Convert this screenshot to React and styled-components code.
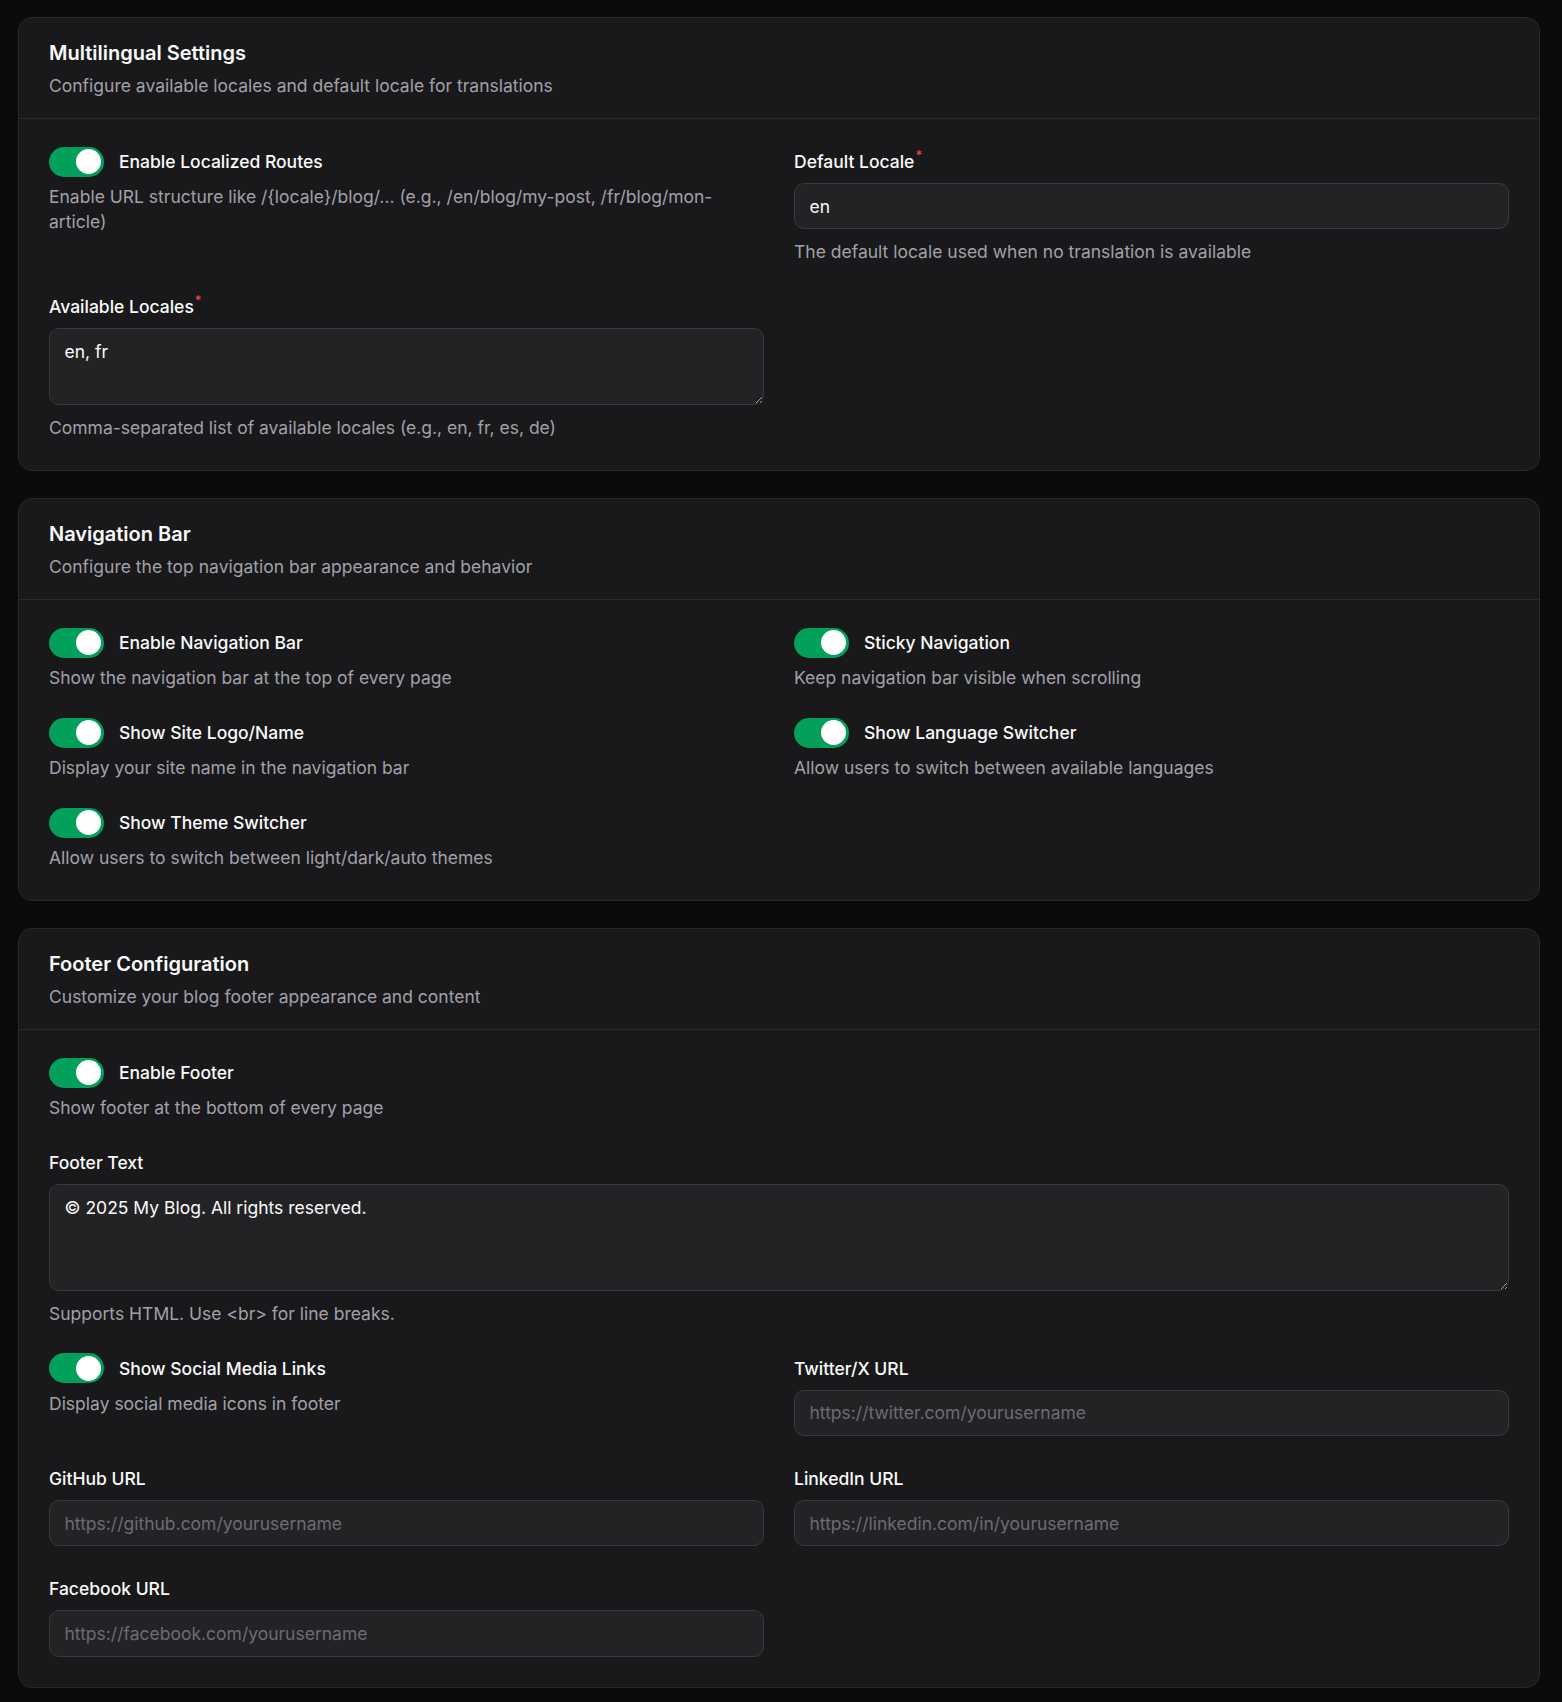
import React from "react";
import styled, { createGlobalStyle } from "styled-components";

const GlobalStyle = createGlobalStyle`
  * {
    box-sizing: border-box;
  }
  body {
    margin: 0;
    background: #0b0b0d;
    color: #fafafa;
    font-family: Inter, "Noto Sans", "Liberation Sans", sans-serif;
    -webkit-font-smoothing: antialiased;
  }
`;

const Page = styled.div`
  display: flex;
  flex-direction: column;
  gap: 27px;
  padding: 17px 22px 15px 18px;
`;

const Card = styled.section`
  background: #19191b;
  border: 1px solid #29292c;
  border-radius: 14px;
`;

const CardHeader = styled.header`
  display: flex;
  flex-direction: column;
  gap: 5px;
  padding: 20px 30px;
  border-bottom: 1px solid #2a2a2d;
`;

const CardTitle = styled.h2`
  margin: 0;
  font-size: 20px;
  line-height: 30px;
  font-weight: 600;
  color: #fafafa;
`;

const CardDescription = styled.p`
  margin: 0;
  font-size: 17.5px;
  line-height: 25px;
  color: #a1a1aa;
`;

const CardBody = styled.div`
  display: grid;
  grid-template-columns: 1fr 1fr;
  gap: 30px;
  padding: 30px;
  align-items: start;
`;

const Cell = styled.div`
  display: flex;
  flex-direction: column;
  min-width: 0;
  grid-column: ${(p) => (p.$wide ? "1 / -1" : "auto")};
`;

const SwitchRow = styled.div`
  display: flex;
  align-items: center;
  gap: 15px;
  height: 25px;
`;

const Track = styled.button`
  flex-shrink: 0;
  display: flex;
  align-items: center;
  width: 55px;
  height: 30px;
  padding: 0;
  border: 2.5px solid transparent;
  border-radius: 999px;
  background: ${(p) => (p.$on ? "#03a05b" : "#3f3f46")};
  cursor: pointer;
`;

const Thumb = styled.span`
  display: block;
  width: 25px;
  height: 25px;
  border-radius: 50%;
  background: #ffffff;
  transform: translateX(${(p) => (p.$on ? "25px" : "0")});
`;

const SwitchLabel = styled.span`
  font-size: 17.5px;
  line-height: 25px;
  font-weight: 500;
  color: #fafafa;
`;

const Hint = styled.p`
  margin: 10px 0 0;
  font-size: 17.5px;
  line-height: 25px;
  color: #a1a1aa;
`;

const Label = styled.label`
  display: block;
  margin-bottom: 8.75px;
  font-size: 17.5px;
  line-height: 25px;
  font-weight: 500;
  color: #fafafa;
`;

const Required = styled.span`
  margin-left: 1px;
  font-size: 13px;
  line-height: 1;
  vertical-align: top;
  color: #ef4444;
`;

const fieldStyles = `
  width: 100%;
  border: 1px solid #3a3a3e;
  border-radius: 10px;
  background: #232326;
  color: #fafafa;
  font-family: Inter, "Noto Sans", "Liberation Sans", sans-serif;
  font-size: 17.5px;
  line-height: 25px;
  outline: none;

  &::placeholder {
    color: #6c6c74;
  }
`;

const Input = styled.input`
  ${fieldStyles}
  height: 46.5px;
  padding: 0 14.5px;
`;

const TextArea = styled.textarea`
  ${fieldStyles}
  display: block;
  height: ${(p) => p.$height}px;
  padding: 10px 14.5px;
  resize: vertical;
`;

const Toggle = ({ label, hint, on = true }) => (
  <Cell>
    <SwitchRow>
      <Track type="button" role="switch" aria-checked={on} $on={on}>
        <Thumb $on={on} />
      </Track>
      <SwitchLabel>{label}</SwitchLabel>
    </SwitchRow>
    {hint && <Hint>{hint}</Hint>}
  </Cell>
);

const Field = ({ label, required, hint, wide, children }) => (
  <Cell $wide={wide}>
    <Label>
      {label}
      {required && <Required>*</Required>}
    </Label>
    {children}
    {hint && <Hint>{hint}</Hint>}
  </Cell>
);

const SettingsCard = ({ title, description, children }) => (
  <Card>
    <CardHeader>
      <CardTitle>{title}</CardTitle>
      <CardDescription>{description}</CardDescription>
    </CardHeader>
    <CardBody>{children}</CardBody>
  </Card>
);

const App = () => (
  <>
    <GlobalStyle />
    <Page>
      <SettingsCard
        title="Multilingual Settings"
        description="Configure available locales and default locale for translations"
      >
        <Toggle
          label="Enable Localized Routes"
          hint="Enable URL structure like /{locale}/blog/... (e.g., /en/blog/my-post, /fr/blog/mon-article)"
        />
        <Field
          label="Default Locale"
          required
          hint="The default locale used when no translation is available"
        >
          <Input defaultValue="en" />
        </Field>
        <Field
          label="Available Locales"
          required
          hint="Comma-separated list of available locales (e.g., en, fr, es, de)"
        >
          <TextArea $height={77} defaultValue="en, fr" />
        </Field>
      </SettingsCard>

      <SettingsCard
        title="Navigation Bar"
        description="Configure the top navigation bar appearance and behavior"
      >
        <Toggle
          label="Enable Navigation Bar"
          hint="Show the navigation bar at the top of every page"
        />
        <Toggle
          label="Sticky Navigation"
          hint="Keep navigation bar visible when scrolling"
        />
        <Toggle
          label="Show Site Logo/Name"
          hint="Display your site name in the navigation bar"
        />
        <Toggle
          label="Show Language Switcher"
          hint="Allow users to switch between available languages"
        />
        <Toggle
          label="Show Theme Switcher"
          hint="Allow users to switch between light/dark/auto themes"
        />
      </SettingsCard>

      <SettingsCard
        title="Footer Configuration"
        description="Customize your blog footer appearance and content"
      >
        <Toggle
          label="Enable Footer"
          hint="Show footer at the bottom of every page"
        />
        <Field
          wide
          label="Footer Text"
          hint="Supports HTML. Use <br> for line breaks."
        >
          <TextArea
            $height={107}
            defaultValue="© 2025 My Blog. All rights reserved."
          />
        </Field>
        <Toggle
          label="Show Social Media Links"
          hint="Display social media icons in footer"
        />
        <Field label="Twitter/X URL">
          <Input placeholder="https://twitter.com/yourusername" />
        </Field>
        <Field label="GitHub URL">
          <Input placeholder="https://github.com/yourusername" />
        </Field>
        <Field label="LinkedIn URL">
          <Input placeholder="https://linkedin.com/in/yourusername" />
        </Field>
        <Field label="Facebook URL">
          <Input placeholder="https://facebook.com/yourusername" />
        </Field>
      </SettingsCard>
    </Page>
  </>
);

export default App;
